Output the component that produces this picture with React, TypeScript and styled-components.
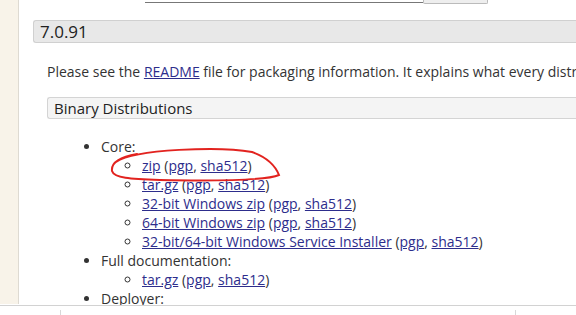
import { FunctionComponent } from "react";
import styled, { createGlobalStyle } from "styled-components";

interface Download {
  label: string;
}

const coreDownloads: Download[] = [
  { label: "zip" },
  { label: "tar.gz" },
  { label: "32-bit Windows zip" },
  { label: "64-bit Windows zip" },
  { label: "32-bit/64-bit Windows Service Installer" },
];

const docDownloads: Download[] = [{ label: "tar.gz" }];

const DownloadItem: FunctionComponent<Download> = ({ label }) => (
  <SubItem>
    <Link href="#">{label}</Link> (<Link href="#">pgp</Link>,{" "}
    <Link href="#">sha512</Link>)
  </SubItem>
);

const App: FunctionComponent = () => {
  return (
    <Frame>
      <GlobalStyle />
      <Upper>
        <Sidebar />
        <Main>
          <SearchRow>
            <SearchInput />
            <SearchButton />
          </SearchRow>
          <VersionHeading>7.0.91</VersionHeading>
          <Section>
            <Para>
              Please see the <Link href="#">README</Link> file for packaging
              information. It explains what every distribution contains.
            </Para>
            <SubHeading>Binary Distributions</SubHeading>
            <List>
              <Item>
                Core:
                <SubList>
                  {coreDownloads.map((d, i) => (
                    <DownloadItem key={i} label={d.label} />
                  ))}
                </SubList>
              </Item>
              <Item>
                Full documentation:
                <SubList>
                  {docDownloads.map((d, i) => (
                    <DownloadItem key={i} label={d.label} />
                  ))}
                </SubList>
              </Item>
              <Item>Deployer:</Item>
            </List>
          </Section>
        </Main>
      </Upper>
      <Lower>
        <Tick />
        <Tick />
      </Lower>
      <Scribble width="576" height="315" viewBox="0 0 576 315">
        <path
          d="M 116 162 C 135 149, 220 146, 252 152 C 266 157, 275 165, 279 175 C 268 180, 215 181, 160 180 C 130 179, 114 178, 112 171 C 111 163, 120 157, 137 154"
          fill="none"
          stroke="#e2231f"
          strokeWidth="2"
          strokeLinecap="round"
        />
      </Scribble>
    </Frame>
  );
};

const GlobalStyle = createGlobalStyle`
  html, body {
    margin: 0;
    padding: 0;
    background: #fff;
  }
  body {
    width: 576px;
    height: 315px;
    overflow: hidden;
    font-family: "Open Sans", "DejaVu Sans", sans-serif;
    color: #333;
  }
`;

const Frame = styled.div`
  position: relative;
  width: 576px;
  height: 315px;
  display: flex;
  flex-direction: column;
  overflow: hidden;
`;

const Upper = styled.div`
  display: flex;
  height: 305px;
  border-bottom: 1px solid #d2d2d2;
`;

const Sidebar = styled.div`
  width: 18px;
  height: 304px;
  background: #f8f3e9;
  border-right: 1px solid #dedad2;
`;

const Main = styled.div`
  flex: 1;
  padding-left: 14px;
  overflow: hidden;
  white-space: nowrap;
`;

const SearchRow = styled.div`
  height: 4px;
  display: flex;
  align-items: flex-end;
  margin-left: 112px;
`;

const SearchInput = styled.div`
  width: 278px;
  height: 20px;
  margin-bottom: 1px;
  border-bottom: 1px solid #777;
`;

const SearchButton = styled.div`
  width: 63px;
  height: 20px;
  background: #eee;
  border: 1px solid #bbb;
  border-top: none;
  border-radius: 0 0 2px 2px;
`;

const VersionHeading = styled.div`
  margin-top: 16px;
  height: 21px;
  line-height: 21px;
  padding-left: 6px;
  background: #e8e8e8;
  border: 1px solid #d0d0d0;
  border-right: none;
  border-radius: 3px 0 0 3px;
  font-size: 17px;
  color: #222;
`;

const Section = styled.div`
  padding-left: 14px;
`;

const Para = styled.p`
  margin: 19px 0 0;
  font-size: 14px;
  line-height: 19px;
`;

const SubHeading = styled.div`
  margin-top: 16px;
  height: 20px;
  line-height: 21px;
  padding-left: 6px;
  background: #f4f4f4;
  border: 1px solid #d4d4d4;
  border-right: none;
  border-radius: 3px 0 0 3px;
  font-size: 15px;
  font-weight: 500;
  color: #222;
`;

const List = styled.ul`
  margin: 18px 0 0;
  padding-left: 54px;
  list-style: disc;
  font-size: 14px;
  line-height: 19px;
`;

const Item = styled.li``;

const SubList = styled.ul`
  margin: 0;
  padding-left: 41px;
  list-style: circle;
`;

const SubItem = styled.li``;

const Link = styled.a`
  color: #2d2d8c;
  text-decoration: underline;
`;

const Lower = styled.div`
  flex: 1;
  display: flex;
  gap: 454px;
  padding-left: 60px;
`;

const Tick = styled.div`
  width: 1px;
  height: 6px;
  margin-top: 4px;
  background: #d8d8d8;
`;

const Scribble = styled.svg`
  position: absolute;
  left: 0;
  top: 0;
  pointer-events: none;
`;

export default App;
